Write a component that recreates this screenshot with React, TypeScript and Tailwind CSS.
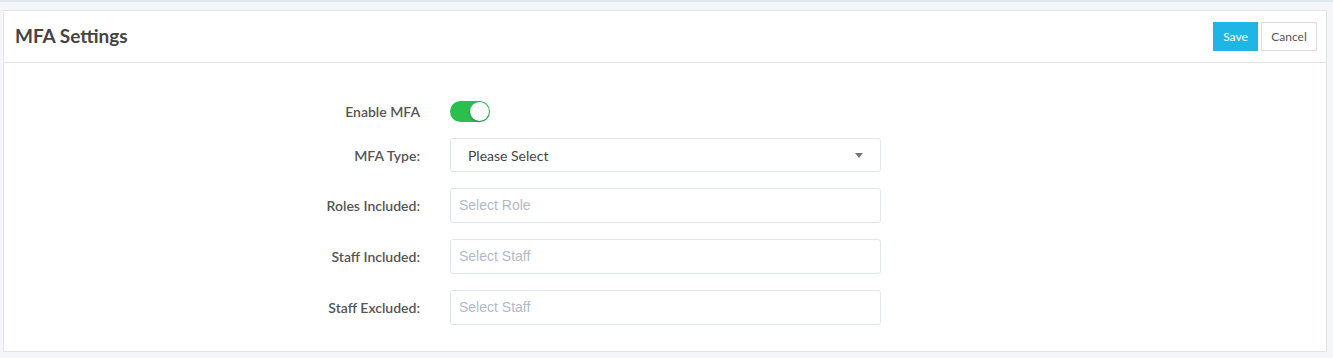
const fields = [
  { label: "Roles Included:", placeholder: "Select Role" },
  { label: "Staff Included:", placeholder: "Select Staff" },
  { label: "Staff Excluded:", placeholder: "Select Staff" },
];

function Row({ label, children }: { label: string; children: React.ReactNode }) {
  return (
    <div className="flex items-center">
      <label className="w-[416px] text-right text-[14px] font-semibold text-[#555]">{label}</label>
      <div className="ml-[30px] w-[431px]">{children}</div>
    </div>
  );
}

export default function App() {
  return (
    <div
      className="min-h-[358px] border-t-2 border-[#e1e7ef] bg-[#f4f6fa] px-[3px] pt-[8px] pb-[6px]"
      style={{ fontFamily: "Lato, 'Open Sans', sans-serif" }}
    >
      <div className="mr-[3px] border border-[#e2e6ea] bg-white">
        <div className="flex h-[52px] items-center justify-between border-b border-[#e2e6ea] pl-[11px] pr-[9px]">
          <h1 className="text-[19px] font-bold text-[#444]">MFA Settings</h1>
          <div className="flex gap-[3px]">
            <button className="h-[29px] w-[45px] bg-[#1fb6e6] text-[12px] text-white">Save</button>
            <button className="h-[29px] w-[56px] border border-[#dddddd] bg-white text-[12px] text-[#555]">
              Cancel
            </button>
          </div>
        </div>
        <div className="flex flex-col gap-[16px] pt-[38px] pb-[26px]">
          <Row label="Enable MFA">
            <div className="relative h-[21px] w-[40px] rounded-full bg-[#2bbf4e]">
              <span className="absolute right-[1px] top-[1px] h-[19px] w-[19px] rounded-full bg-white shadow-[0_1px_2px_rgba(0,0,0,0.35)]" />
            </div>
          </Row>
          <Row label="MFA Type:">
            <div className="flex h-[34px] items-center justify-between rounded-[3px] border border-[#dfe5e8] pl-[17px] pr-[17px] text-[14px] text-[#444]">
              <span>Please Select</span>
              <span className="h-0 w-0 border-x-[4px] border-t-[5px] border-x-transparent border-t-[#777]" />
            </div>
          </Row>
          {fields.map((f) => (
            <Row key={f.label} label={f.label}>
              <div
                className="flex h-[35px] items-center rounded-[3px] border border-[#dfe5e8] pl-[8px] text-[14px] text-[#b5b9c6]"
                style={{ fontFamily: "'Liberation Sans', Arial, sans-serif" }}
              >
                {f.placeholder}
              </div>
            </Row>
          ))}
        </div>
      </div>
    </div>
  );
}
